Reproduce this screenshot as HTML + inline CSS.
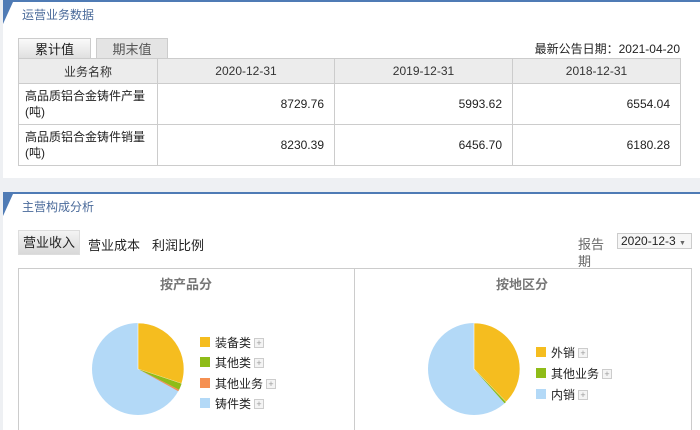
<!DOCTYPE html><html><head><meta charset="utf-8"><style>
*{margin:0;padding:0;box-sizing:border-box}
html,body{width:700px;height:430px;overflow:hidden}
body{background:#eef0f3;font-family:"Liberation Sans","Noto Sans CJK SC",sans-serif;font-size:12px;color:#222;position:relative}
.panel{position:absolute;left:3px;right:0;background:#fff;border-top:2px solid #4f7bb5}
.tri{position:absolute;left:0;top:0;width:0;height:0;border-top:22px solid #4f7bb5;border-right:10px solid transparent}
.ttl{position:absolute;left:19px;top:4px;color:#4a6a9a;font-size:12px}
.a{position:absolute}
table{border-collapse:collapse;position:absolute;left:18px;top:58px;width:663px}
td,th{border:1px solid #ccc;font-weight:normal}
th{background:#ececec;height:25px;color:#333}
td{height:41px;padding:0 10px 0 6px;text-align:right;line-height:16px}
td.l{text-align:left}
.tab{position:absolute;height:20px;text-align:center;line-height:22px;font-size:13px;border:1px solid #ccc;border-bottom:none}
.sq{position:absolute;width:10px;height:10px}
.lg{position:absolute;font-size:12px}
.pl{display:inline-block;width:10px;height:10px;border:1px solid #ccc;font-size:9px;line-height:8px;text-align:center;color:#999;margin-left:3px;background:#f4f4f4;vertical-align:1px}
</style></head><body>
<div class="panel" style="top:0;height:178px;background:#fff"><div class="tri"></div><div class="ttl">运营业务数据</div></div>
<div class="tab" style="left:18px;top:38px;width:73px;background:linear-gradient(#fafafa,#e0e0e0)">累计值</div>
<div class="tab" style="left:96px;top:38px;width:72px;background:#e4e4e4;color:#555">期末值</div>
<div class="a" style="right:20px;top:40px;font-size:12px">最新公告日期：2021-04-20</div>
<table><tr><th style="width:139px">业务名称</th><th style="width:177px">2020-12-31</th><th style="width:178px">2019-12-31</th><th>2018-12-31</th></tr>
<tr><td class="l">高品质铝合金铸件产量(吨)</td><td>8729.76</td><td>5993.62</td><td>6554.04</td></tr>
<tr><td class="l">高品质铝合金铸件销量(吨)</td><td>8230.39</td><td>6456.70</td><td>6180.28</td></tr></table>

<div class="panel" style="top:192px;height:238px"><div class="tri"></div><div class="ttl">主营构成分析</div></div>
<div class="a" style="left:18px;top:230px;width:62px;height:25px;background:linear-gradient(#f4f4f4,#d8d8d8);border:1px solid #ddd;font-size:13px;line-height:24px;text-align:center">营业收入</div>
<div class="a" style="left:88px;top:235px;font-size:13px">营业成本</div>
<div class="a" style="left:152px;top:235px;font-size:13px">利润比例</div>
<div class="a" style="left:578px;top:236px;width:26px;font-size:13px;line-height:17px;color:#666">报告期</div>
<div class="a" style="left:617px;top:233px;width:75px;height:16px;border:1px solid #ccc;background:#f6f6f6;font-size:12px;line-height:14px;padding-left:3px;overflow:hidden;white-space:nowrap">2020-12-3 <span style="font-size:7px;color:#666">▼</span></div>
<div class="a" style="left:18px;top:268px;width:674px;height:170px;border:1px solid #ccc;background:#fff"></div>
<div class="a" style="left:354px;top:268px;width:1px;height:170px;background:#ccc"></div>
<div class="a" style="left:160px;top:274px;font-weight:bold;color:#777;font-size:13px">按产品分</div>
<div class="a" style="left:496px;top:274px;font-weight:bold;color:#777;font-size:13px">按地区分</div>
<svg class="a" style="left:0;top:0" width="700" height="430">
<g transform="translate(138,369)">
<circle r="46" fill="#b3d9f7"/>
<path d="M0,0 L0,-46 A46,46 0 0 1 43.6,14.6 Z" fill="#f5bd1f" stroke="#fff" stroke-width="0.6"/>
<path d="M0,0 L43.6,14.6 A46,46 0 0 1 41.1,20.7 Z" fill="#8fbc18"/>
<path d="M0,0 L41.1,20.7 A46,46 0 0 1 40.3,22.2 Z" fill="#f59052"/>
</g>
<g transform="translate(474,369)">
<circle r="46" fill="#b3d9f7"/>
<path d="M0,0 L0,-46 A46,46 0 0 1 32,33 Z" fill="#f5bd1f" stroke="#fff" stroke-width="0.6"/>
<path d="M0,0 L32,33 A46,46 0 0 1 30.6,34.3 Z" fill="#8fbc18"/>
</g></svg>
<div class="sq" style="left:200px;top:337px;background:#f5bd1f"></div><div class="lg" style="left:215px;top:334px">装备类<span class="pl">+</span></div>
<div class="sq" style="left:200px;top:357px;background:#8fbc18"></div><div class="lg" style="left:215px;top:354px">其他类<span class="pl">+</span></div>
<div class="sq" style="left:200px;top:378px;background:#f59052"></div><div class="lg" style="left:215px;top:375px">其他业务<span class="pl">+</span></div>
<div class="sq" style="left:200px;top:398px;background:#b3d9f7"></div><div class="lg" style="left:215px;top:395px">铸件类<span class="pl">+</span></div>
<div class="sq" style="left:536px;top:347px;background:#f5bd1f"></div><div class="lg" style="left:551px;top:344px">外销<span class="pl">+</span></div>
<div class="sq" style="left:536px;top:368px;background:#8fbc18"></div><div class="lg" style="left:551px;top:365px">其他业务<span class="pl">+</span></div>
<div class="sq" style="left:536px;top:389px;background:#b3d9f7"></div><div class="lg" style="left:551px;top:386px">内销<span class="pl">+</span></div>
</body></html>
